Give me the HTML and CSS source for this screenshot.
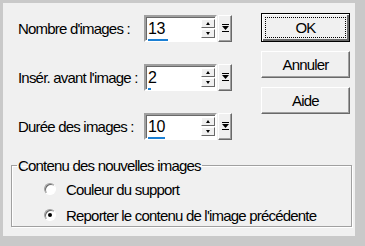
FILE: index.html
```html
<!DOCTYPE html>
<html lang="fr">
<head>
  <meta charset="UTF-8">
  <title>Insérer des images</title>
  <link rel="stylesheet" href="styles.css">
</head>
<body>
  <div class="dialog">
    <div class="top">
      <!-- Champs numériques -->
      <div class="fields">
        <div class="row">
          <label class="label">Nombre d'images :</label>
          <div class="spin">
            <div class="edit">
              <span class="value">13</span>
              <div class="arrows">
                <span class="arrow up"></span>
                <span class="arrow down"></span>
              </div>
              <div class="level" style="width: 20px;"></div>
            </div>
            <span class="jump"><svg width="7" height="9" viewBox="0 0 7 9"><rect x="0" y="0" width="7" height="1" fill="#000"/><path d="M0 2h7L3.5 6z" fill="#000"/><rect x="0" y="7" width="7" height="1" fill="#000"/></svg></span>
          </div>
        </div>
        <div class="row">
          <label class="label">Insér. avant l'image :</label>
          <div class="spin">
            <div class="edit">
              <span class="value">2</span>
              <div class="arrows">
                <span class="arrow up"></span>
                <span class="arrow down"></span>
              </div>
              <div class="level" style="width: 3px;"></div>
            </div>
            <span class="jump"><svg width="7" height="9" viewBox="0 0 7 9"><rect x="0" y="0" width="7" height="1" fill="#000"/><path d="M0 2h7L3.5 6z" fill="#000"/><rect x="0" y="7" width="7" height="1" fill="#000"/></svg></span>
          </div>
        </div>
        <div class="row">
          <label class="label">Durée des images :</label>
          <div class="spin">
            <div class="edit">
              <span class="value">10</span>
              <div class="arrows">
                <span class="arrow up"></span>
                <span class="arrow down"></span>
              </div>
              <div class="level" style="width: 17px;"></div>
            </div>
            <span class="jump"><svg width="7" height="9" viewBox="0 0 7 9"><rect x="0" y="0" width="7" height="1" fill="#000"/><path d="M0 2h7L3.5 6z" fill="#000"/><rect x="0" y="7" width="7" height="1" fill="#000"/></svg></span>
          </div>
        </div>
      </div>

      <!-- Boutons -->
      <div class="buttons">
        <button class="btn default"><span class="focus">OK</span></button>
        <button class="btn">Annuler</button>
        <button class="btn">Aide</button>
      </div>
    </div>

    <!-- Contenu des nouvelles images -->
    <fieldset class="group">
      <legend>Contenu des nouvelles images</legend>
      <div class="option">
        <span class="radio"></span>
        <span>Couleur du support</span>
      </div>
      <div class="option">
        <span class="radio checked"></span>
        <span>Reporter le contenu de l'image précédente</span>
      </div>
    </fieldset>
  </div>
</body>
</html>
```

FILE: styles.css
```css
* {
  margin: 0;
  padding: 0;
  box-sizing: border-box;
}

body {
  font-family: 'Liberation Sans', Arial, sans-serif;
  font-size: 15px;
  letter-spacing: -0.8px;
  color: #000;
  background-color: #c9c9c9;
  width: 365px;
  height: 246px;
  overflow: hidden;
}

.dialog {
  margin: 3px 0 0 3px;
  width: 352px;
  height: 233px;
  background-color: #f0f0f0;
  padding: 12px 0 0 8px;
}

.top {
  display: flex;
}

/* Champs */
.fields {
  display: flex;
  flex-direction: column;
  gap: 22px;
  padding-left: 7px;
}

.row {
  display: flex;
  align-items: center;
  height: 27px;
}

.label {
  width: 126px;
  white-space: nowrap;
}

.spin {
  display: flex;
  gap: 1px;
  height: 27px;
}

.edit {
  position: relative;
  width: 73px;
  height: 27px;
  background-color: #fff;
  border: 2px solid;
  border-color: #a0a0a0 #fff #fff #a0a0a0;
  box-shadow: inset 1px 1px 0 #696969;
  display: flex;
  align-items: center;
  padding-left: 2px;
}

.value {
  flex: 1;
  font-size: 16px;
  letter-spacing: -0.3px;
}

.arrows {
  display: flex;
  flex-direction: column;
  gap: 1px;
  align-self: stretch;
  padding: 2px 0;
}

.arrow {
  position: relative;
  display: block;
  width: 14px;
  flex: 1;
  background-color: #f0f0f0;
  border: 1px solid;
  border-color: #fff #696969 #696969 #fff;
}

.arrow::after {
  content: '';
  position: absolute;
  left: 4px;
  border-left: 2.5px solid transparent;
  border-right: 2.5px solid transparent;
}

.arrow.up::after {
  top: 2px;
  border-bottom: 3px solid #000;
}

.arrow.down::after {
  bottom: 2px;
  border-top: 3px solid #000;
}

.level {
  position: absolute;
  left: 2px;
  bottom: -1px;
  height: 2px;
  background-color: #1a7fd4;
}

.jump {
  width: 14px;
  height: 27px;
  background-color: #f0f0f0;
  border: 1px solid;
  border-color: #fff #696969 #696969 #fff;
  box-shadow: inset -1px -1px 0 #a0a0a0;
  display: flex;
  align-items: center;
  justify-content: center;
}

/* Boutons */
.buttons {
  display: flex;
  flex-direction: column;
  gap: 9px;
  margin-left: 29px;
  margin-top: -2px;
}

.btn {
  width: 89px;
  height: 27px;
  font-family: inherit;
  font-size: 15px;
  letter-spacing: -0.8px;
  background-color: #f0f0f0;
  border: 1px solid;
  border-color: #fff #696969 #696969 #fff;
  box-shadow: inset -1px -1px 0 #a0a0a0;
}

.btn.default {
  height: 29px;
  border: 1px solid #000;
  box-shadow: inset 1px 1px 0 #fff, inset -2px -2px 0 #696969;
  padding: 3px;
}

.focus {
  display: flex;
  align-items: center;
  justify-content: center;
  height: 100%;
  border: 1px dotted #000;
}

/* Groupe */
.group {
  margin: 17px 0 0 0;
  width: 341px;
  height: 70px;
  border: 1px solid #a0a0a0;
  box-shadow: 1px 1px 0 #fff, inset 1px 1px 0 #fff;
  padding: 2px 0 0 0;
}

.group legend {
  margin-left: 5px;
  padding: 0 1px;
}

.option {
  display: flex;
  align-items: center;
  gap: 10px;
  height: 26px;
  padding-left: 32px;
}

.radio {
  position: relative;
  width: 12px;
  height: 12px;
  border-radius: 50%;
  background-color: #fff;
  border: 1px solid;
  border-color: #a0a0a0 #fff #fff #a0a0a0;
  box-shadow: inset 1px 1px 0 #696969;
}

.radio.checked::after {
  content: '';
  position: absolute;
  left: 3px;
  top: 3px;
  width: 4px;
  height: 4px;
  border-radius: 50%;
  background-color: #000;
}
```
